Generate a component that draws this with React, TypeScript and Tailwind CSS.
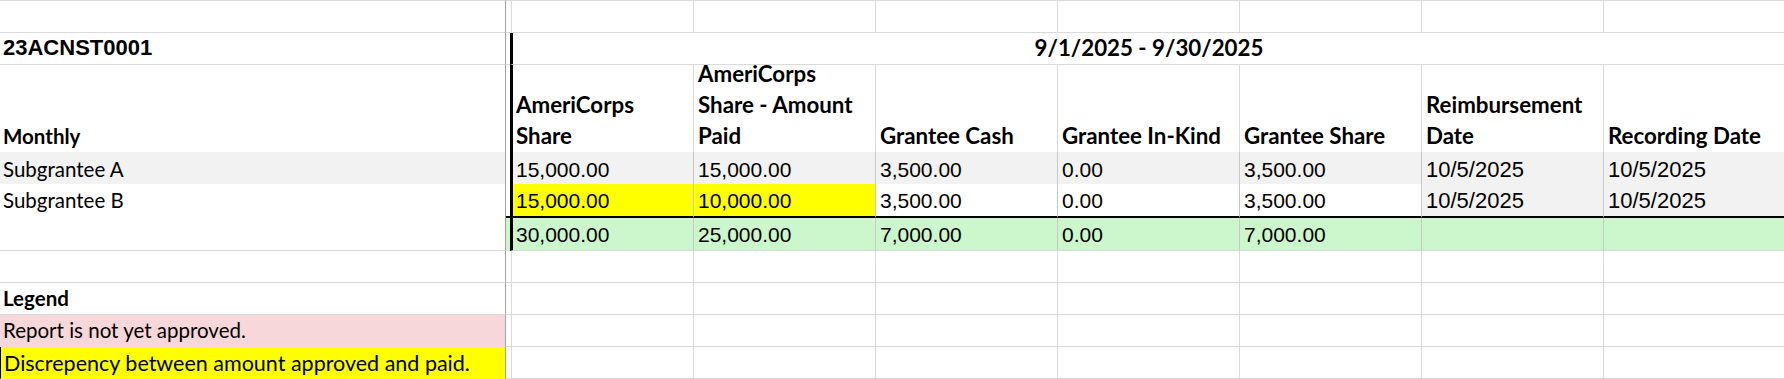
import React from "react";

const LATO = "font-['Lato',sans-serif]";
const ARIAL = "font-['Liberation_Sans',Arial,sans-serif]";

type CP = { cls: string; children?: React.ReactNode };
const Cell = ({ cls, children }: CP) => (
  <div className={"shrink-0 box-border " + cls}>{children}</div>
);

const Num = ({ v }: { v: string }) => (
  <span className={ARIAL + " text-[21px] leading-[22px] whitespace-nowrap"}>{v}</span>
);
const DateTxt = ({ v }: { v: string }) => (
  <span className={ARIAL + " text-[22px] leading-[22px] whitespace-nowrap"}>{v}</span>
);
const Label = ({ v }: { v: string }) => (
  <span className={LATO + " text-[20.5px] leading-[23px] whitespace-nowrap"}>{v}</span>
);

const HeadLines = ({ lines }: { lines: string[] }) => (
  <>
    {lines.map((l) => (
      <div key={l} className={LATO + " font-bold text-[22.3px] leading-[31px] whitespace-nowrap"}>
        {l}
      </div>
    ))}
  </>
);

const PLAIN = "w-[182px] border-l border-b border-[#dadada]";

function PlainRow({ left, leftCls }: { left?: React.ReactNode; leftCls: string }) {
  return (
    <div className="flex h-[32px]">
      <Cell cls={"w-[506px] border-r border-r-[#a0a0a0] flex items-end pl-[3px] " + leftCls}>{left}</Cell>
      <Cell cls="w-[5px] border-b border-[#dadada]" />
      {[0, 1, 2, 3, 4, 5, 6].map((i) => (
        <Cell key={i} cls={PLAIN} />
      ))}
    </div>
  );
}

export default function App() {
  const rowA = ["15,000.00", "15,000.00", "3,500.00", "0.00", "3,500.00"];
  const rowB = ["10,000.00", "3,500.00", "0.00", "3,500.00"];
  const totals = ["25,000.00", "7,000.00", "0.00", "7,000.00"];
  return (
    <div className="w-[1784px] h-[379px] overflow-hidden bg-white text-black">
      <div className="w-[1800px]">
        {/* Row 1 */}
        <div className="flex h-[33px]">
          <Cell cls="w-[506px] border-t border-b border-r border-t-[#dadada] border-b-[#dadada] border-r-[#a0a0a0]" />
          <Cell cls="w-[5px] border-t border-b border-[#dadada]" />
          {[0, 1, 2, 3, 4, 5, 6].map((i) => (
            <Cell key={i} cls="w-[182px] border-t border-b border-l border-[#dadada]" />
          ))}
        </div>

        {/* Row 2 */}
        <div className="flex h-[32px]">
          <Cell cls="w-[506px] border-b border-r border-b-[#dadada] border-r-[#a0a0a0] flex items-end pl-[3px] pb-[5px]">
            <span className={ARIAL + " font-bold text-[22px] leading-[22px]"}>23ACNST0001</span>
          </Cell>
          <Cell cls="w-[4px] border-b border-[#dadada]" />
          <Cell cls="w-[1275px] border-b border-l-[3px] border-b-[#dadada] border-l-black flex items-end justify-center pb-[4px]">
            <span className={LATO + " font-bold text-[22.3px] leading-[24px]"}>9/1/2025 - 9/30/2025</span>
          </Cell>
        </div>

        {/* Row 3 header */}
        <div className="flex h-[87px]">
          <Cell cls="w-[506px] border-r border-r-[#a0a0a0] flex items-end pl-[3px]">
            <span className={LATO + " font-bold text-[20.5px] leading-[31px]"}>Monthly</span>
          </Cell>
          <Cell cls="w-[4px]" />
          <Cell cls="w-[183px] border-l-[3px] border-l-black flex flex-col justify-end pl-[3px] pb-[1px]">
            <HeadLines lines={["AmeriCorps", "Share"]} />
          </Cell>
          <Cell cls="w-[182px] border-l border-l-[#dadada] flex flex-col justify-end pl-[4px] pb-[1px]">
            <HeadLines lines={["AmeriCorps", "Share - Amount", "Paid"]} />
          </Cell>
          <Cell cls="w-[182px] border-l border-l-[#dadada] flex flex-col justify-end pl-[4px] pb-[1px]">
            <HeadLines lines={["Grantee Cash"]} />
          </Cell>
          <Cell cls="w-[182px] border-l border-l-[#dadada] flex flex-col justify-end pl-[4px] pb-[1px]">
            <HeadLines lines={["Grantee In-Kind"]} />
          </Cell>
          <Cell cls="w-[182px] border-l border-l-[#dadada] flex flex-col justify-end pl-[4px] pb-[1px]">
            <HeadLines lines={["Grantee Share"]} />
          </Cell>
          <Cell cls="w-[182px] border-l border-l-[#dadada] flex flex-col justify-end pl-[4px] pb-[1px]">
            <HeadLines lines={["Reimbursement", "Date"]} />
          </Cell>
          <Cell cls="w-[182px] border-l border-l-[#dadada] flex flex-col justify-end pl-[4px] pb-[1px]">
            <HeadLines lines={["Recording Date"]} />
          </Cell>
        </div>

        {/* Row A */}
        <div className="flex h-[32px]">
          <Cell cls="w-[506px] bg-[#f2f2f2] border-r border-r-[#a0a0a0] flex items-end pl-[3px] pb-[3px]">
            <Label v="Subgrantee A" />
          </Cell>
          <Cell cls="w-[4px]" />
          <Cell cls="w-[183px] bg-[#f2f2f2] border-l-[3px] border-l-black flex items-end pl-[3px] pb-[3px]">
            <Num v={rowA[0]} />
          </Cell>
          {rowA.slice(1).map((v, i) => (
            <Cell key={i} cls="w-[182px] bg-[#f2f2f2] border-l border-l-[#c8c8c8] flex items-end pl-[4px] pb-[3px]">
              <Num v={v} />
            </Cell>
          ))}
          {[0, 1].map((i) => (
            <Cell key={"d" + i} cls="w-[182px] bg-[#f2f2f2] border-l border-l-[#c8c8c8] flex items-end pl-[4px] pb-[3px]">
              <DateTxt v="10/5/2025" />
            </Cell>
          ))}
        </div>

        {/* Row B */}
        <div className="flex h-[34px]">
          <Cell cls="w-[506px] border-r border-r-[#a0a0a0] flex items-end pl-[3px] pb-[6px]">
            <Label v="Subgrantee B" />
          </Cell>
          <Cell cls="w-[4px] border-b-2 border-b-black" />
          <Cell cls="w-[183px] bg-[#ffff00] border-l-[3px] border-b-2 border-black flex items-end pl-[3px] pb-[4px]">
            <Num v="15,000.00" />
          </Cell>
          <Cell cls="w-[182px] bg-[#ffff00] border-l border-b-2 border-l-[#c8c8c8] border-b-black flex items-end pl-[4px] pb-[4px]">
            <Num v={rowB[0]} />
          </Cell>
          {rowB.slice(1).map((v, i) => (
            <Cell key={i} cls="w-[182px] bg-white border-l border-b-2 border-l-[#c8c8c8] border-b-black flex items-end pl-[4px] pb-[4px]">
              <Num v={v} />
            </Cell>
          ))}
          {[0, 1].map((i) => (
            <Cell key={"d" + i} cls="w-[182px] bg-[#f2f2f2] border-l border-b-2 border-l-[#c8c8c8] border-b-black flex items-end pl-[4px] pb-[4px]">
              <DateTxt v="10/5/2025" />
            </Cell>
          ))}
        </div>

        {/* Totals */}
        <div className="flex h-[33px]">
          <Cell cls="w-[506px] border-r border-b border-r-[#a0a0a0] border-b-[#dadada]" />
          <Cell cls="w-[4px] bg-[#ccf7cc] border-b border-b-[#dadada]" />
          <Cell cls="w-[183px] bg-[#ccf7cc] border-l-[3px] border-b border-l-black border-b-[#dadada] flex items-end pl-[3px] pb-[4px]">
            <Num v="30,000.00" />
          </Cell>
          {totals.map((v, i) => (
            <Cell key={i} cls="w-[182px] bg-[#ccf7cc] border-l border-b border-l-[#c8c8c8] border-b-[#dadada] flex items-end pl-[4px] pb-[4px]">
              <Num v={v} />
            </Cell>
          ))}
          {[0, 1].map((i) => (
            <Cell key={"e" + i} cls="w-[182px] bg-[#ccf7cc] border-l border-b border-l-[#c8c8c8] border-b-[#dadada]" />
          ))}
        </div>

        {/* Empty row */}
        <PlainRow leftCls="border-b border-b-[#dadada]" />

        {/* Legend */}
        <PlainRow
          leftCls="border-b border-b-[#dadada] pb-[4px]"
          left={<span className={LATO + " font-bold text-[20.5px] leading-[23px]"}>Legend</span>}
        />

        {/* Pink */}
        <PlainRow
          leftCls="bg-[#f8d7da] border-b border-b-transparent pb-[4px]"
          left={<Label v="Report is not yet approved." />}
        />

        {/* Yellow */}
        <PlainRow
          leftCls="bg-[#ffff00] border-l border-b border-l-black border-b-transparent pb-[3px] pl-[2px]"
          left={
            <span className={LATO + " text-[21.5px] leading-[24px] whitespace-nowrap"}>
              Discrepency between amount approved and paid.
            </span>
          }
        />
      </div>
    </div>
  );
}
